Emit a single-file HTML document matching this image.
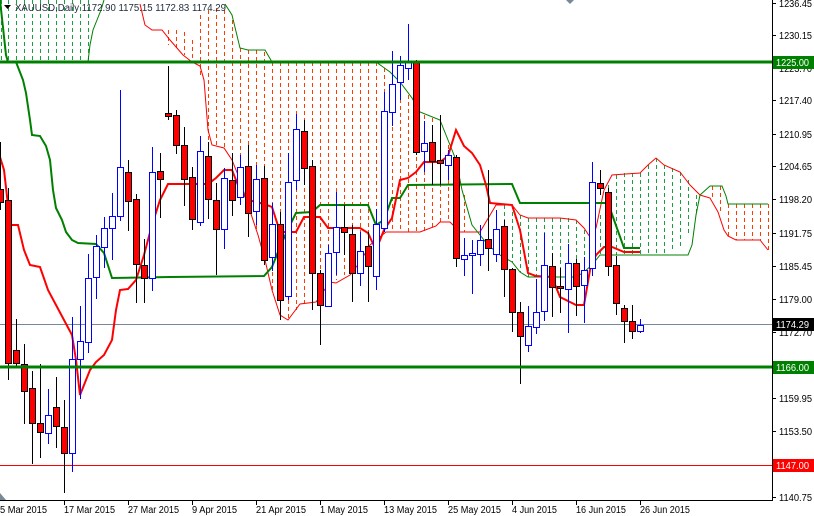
<!DOCTYPE html>
<html><head><meta charset="utf-8"><style>
html,body{margin:0;padding:0;background:#fff;}
svg{display:block;font-family:"Liberation Sans",sans-serif;}
</style></head><body>
<svg width="814" height="516" viewBox="0 0 814 516" xmlns="http://www.w3.org/2000/svg">
<rect width="814" height="516" fill="#fff"/>

<g transform="translate(0.5,0)">
<!-- top-left green cloud -->
<g stroke="#1aa040" stroke-width="1" stroke-dasharray="4,3">
<line x1="1" y1="0" x2="1" y2="62"/><line x1="8" y1="0" x2="8" y2="62"/><line x1="16" y1="0" x2="16" y2="62"/><line x1="24" y1="0" x2="24" y2="62"/><line x1="32" y1="0" x2="32" y2="62"/><line x1="40" y1="0" x2="40" y2="62"/><line x1="48" y1="0" x2="48" y2="62"/><line x1="56" y1="0" x2="56" y2="62"/><line x1="64" y1="0" x2="64" y2="62"/><line x1="72" y1="0" x2="72" y2="62"/><line x1="80" y1="0" x2="80" y2="62"/><line x1="88" y1="0" x2="88" y2="62"/>
</g>
<!-- orange cloud -->
<g stroke="#ff3c00" stroke-width="1" stroke-dasharray="4,3">
<line x1="168" y1="30" x2="168" y2="45"/><line x1="176" y1="30" x2="176" y2="50"/><line x1="184" y1="32" x2="184" y2="55"/><line x1="192" y1="40" x2="192" y2="62"/>
<line x1="200" y1="15" x2="200" y2="75"/><line x1="208" y1="10" x2="208" y2="140"/><line x1="216" y1="8" x2="216" y2="147"/><line x1="224" y1="10" x2="224" y2="150"/><line x1="232" y1="20" x2="232" y2="165"/><line x1="240" y1="48" x2="240" y2="180"/><line x1="248" y1="50" x2="248" y2="205"/><line x1="256" y1="50" x2="256" y2="232"/><line x1="264" y1="52" x2="264" y2="258"/><line x1="272" y1="62" x2="272" y2="290"/><line x1="280" y1="62" x2="280" y2="315"/><line x1="288" y1="62" x2="288" y2="318"/><line x1="296" y1="62" x2="296" y2="310"/><line x1="304" y1="62" x2="304" y2="303"/><line x1="312" y1="62" x2="312" y2="302"/><line x1="320" y1="62" x2="320" y2="290"/><line x1="328" y1="62" x2="328" y2="283"/><line x1="336" y1="62" x2="336" y2="280"/><line x1="344" y1="62" x2="344" y2="275"/><line x1="352" y1="62" x2="352" y2="262"/><line x1="360" y1="62" x2="360" y2="250"/><line x1="368" y1="62" x2="368" y2="240"/><line x1="376" y1="62" x2="376" y2="234"/><line x1="384" y1="68" x2="384" y2="232"/><line x1="392" y1="78" x2="392" y2="232"/><line x1="400" y1="85" x2="400" y2="232"/><line x1="408" y1="95" x2="408" y2="232"/><line x1="416" y1="108" x2="416" y2="232"/><line x1="424" y1="115" x2="424" y2="232"/><line x1="432" y1="118" x2="432" y2="228"/><line x1="440" y1="120" x2="440" y2="222"/><line x1="448" y1="145" x2="448" y2="222"/><line x1="456" y1="160" x2="456" y2="228"/><line x1="464" y1="195" x2="464" y2="232"/>
<line x1="712" y1="186" x2="712" y2="200"/><line x1="720" y1="186" x2="720" y2="212"/>
<line x1="728" y1="204" x2="728" y2="236"/><line x1="736" y1="204" x2="736" y2="240"/><line x1="744" y1="204" x2="744" y2="240"/><line x1="752" y1="204" x2="752" y2="240"/><line x1="760" y1="204" x2="760" y2="240"/><line x1="768" y1="204" x2="768" y2="250"/>
</g>
<!-- green cloud right -->
<g stroke="#1aa040" stroke-width="1" stroke-dasharray="4,3">
<line x1="488" y1="225" x2="488" y2="245"/><line x1="496" y1="210" x2="496" y2="250"/><line x1="504" y1="205" x2="504" y2="255"/><line x1="512" y1="205" x2="512" y2="262"/><line x1="520" y1="215" x2="520" y2="272"/><line x1="528" y1="218" x2="528" y2="277"/><line x1="536" y1="218" x2="536" y2="277"/><line x1="544" y1="218" x2="544" y2="277"/><line x1="552" y1="218" x2="552" y2="277"/><line x1="560" y1="218" x2="560" y2="277"/><line x1="568" y1="218" x2="568" y2="277"/><line x1="576" y1="220" x2="576" y2="277"/><line x1="584" y1="230" x2="584" y2="275"/><line x1="592" y1="230" x2="592" y2="265"/><line x1="600" y1="215" x2="600" y2="255"/><line x1="608" y1="185" x2="608" y2="258"/><line x1="616" y1="175" x2="616" y2="255"/><line x1="624" y1="173" x2="624" y2="255"/><line x1="632" y1="173" x2="632" y2="255"/><line x1="640" y1="173" x2="640" y2="255"/><line x1="648" y1="165" x2="648" y2="255"/><line x1="656" y1="158" x2="656" y2="255"/><line x1="664" y1="165" x2="664" y2="255"/><line x1="672" y1="168" x2="672" y2="250"/><line x1="680" y1="172" x2="680" y2="246"/><line x1="688" y1="180" x2="688" y2="236"/><line x1="696" y1="195" x2="696" y2="215"/>
</g>
</g>
<polyline points="88,62 90,45 93,30 97,20 101,10 104,0" fill="none" stroke="#008000" stroke-width="1"/>

<!-- thin span lines -->
<polyline points="140,4 145,25 152,30 162,30 170,40 183,55 192,62 200,66 204,80 208,130 212,145 224,148 232,160 240,180 248,205 258,235 265,260 272,290 280,315 288,320 300,304 316,302 330,282 336,283 350,275 360,262 370,245 386,232 400,232 420,232 436,226 440,222 450,222 460,232 470,232 480,232 496,205 512,205 520,215 528,218 560,218 576,220 584,228 590,237 596,228 604,190 612,175 640,173 648,165 656,158 664,165 680,172 690,185 700,195 710,198 718,212 724,230 728,236 736,240 760,240 768,250" fill="none" stroke="#ff0000" stroke-width="1"/>
<polyline points="225,4 232,15 240,48 248,50 265,50 272,62 376,62 390,72 400,82 412,98 420,112 440,120 448,140 456,160 462,190 472,225 480,235 488,245 500,255 512,262 520,272 528,277 576,277 584,272 592,265 600,255 624,255 688,255 692,245 696,215 700,195 710,186 722,186 726,196 728,204 768,204" fill="none" stroke="#008000" stroke-width="1"/>

<line x1="0" y1="324.5" x2="772" y2="324.5" stroke="#778899" stroke-width="1"/>
<line x1="0" y1="465.5" x2="772" y2="465.5" stroke="#ff0000" stroke-width="1"/>

<polyline points="0,0 6,55 8,62 16,62 23,80 26,93 30,120 32,135 40,136 46,146 50,160 53,190 56,208 62,220 66,232 72,240 78,243 96,244 104,253 112,278 170,277 264,276 272,267 280,247 288,229 296,213 312,212 320,205 368,205 376,225 384,220 392,198 400,198 408,185 512,184 520,203 608,203 624,248 640,248" fill="none" stroke="#008000" stroke-width="2"/>
<polyline points="0,157 4,170 8,205 10,225 18,225 24,250 30,265 40,267 48,290 56,305 64,320 72,335 76,360 80,395 84,385 90,370 96,362 104,355 112,340 116,310 120,290 128,289 136,280 144,255 152,225 160,200 168,184 208,184 216,178 224,170 232,170 240,190 248,200 264,204 272,207 280,232 296,232 304,217 320,217 328,228 360,228 368,233 376,250 384,230 392,218 400,180 408,178 416,172 424,162 440,162 448,156 456,130 464,146 472,153 480,165 486,185 490,203 512,205 520,230 528,273 536,276 552,277 560,297 568,301 576,305 584,305 590,270 596,255 604,247 612,247 624,252 640,252" fill="none" stroke="#ff0000" stroke-width="2"/>

<g id="candles"></g>

<line x1="0" y1="62" x2="772" y2="62" stroke="#008000" stroke-width="3"/>
<line x1="0" y1="367" x2="772" y2="367" stroke="#008000" stroke-width="3"/>

<line x1="772.5" y1="0" x2="772.5" y2="500" stroke="#000" stroke-width="1"/>
<line x1="0" y1="500.5" x2="773" y2="500.5" stroke="#000" stroke-width="1"/>
<g stroke="#000" stroke-width="1">
<line x1="772" y1="3.5" x2="776" y2="3.5"/><line x1="772" y1="35.5" x2="776" y2="35.5"/><line x1="772" y1="68.5" x2="776" y2="68.5"/><line x1="772" y1="100.5" x2="776" y2="100.5"/><line x1="772" y1="134.5" x2="776" y2="134.5"/><line x1="772" y1="166.5" x2="776" y2="166.5"/><line x1="772" y1="199.5" x2="776" y2="199.5"/><line x1="772" y1="233.5" x2="776" y2="233.5"/><line x1="772" y1="266.5" x2="776" y2="266.5"/><line x1="772" y1="299.5" x2="776" y2="299.5"/><line x1="772" y1="332.5" x2="776" y2="332.5"/><line x1="772" y1="398.5" x2="776" y2="398.5"/><line x1="772" y1="431.5" x2="776" y2="431.5"/><line x1="772" y1="497.5" x2="776" y2="497.5"/>
<line x1="64.5" y1="500" x2="64.5" y2="505"/><line x1="128.5" y1="500" x2="128.5" y2="505"/><line x1="192.5" y1="500" x2="192.5" y2="505"/><line x1="256.5" y1="500" x2="256.5" y2="505"/><line x1="320.5" y1="500" x2="320.5" y2="505"/><line x1="384.5" y1="500" x2="384.5" y2="505"/><line x1="448.5" y1="500" x2="448.5" y2="505"/><line x1="512.5" y1="500" x2="512.5" y2="505"/><line x1="576.5" y1="500" x2="576.5" y2="505"/><line x1="640.5" y1="500" x2="640.5" y2="505"/>
</g>
<line x1="64.5" y1="484" x2="64.5" y2="493" stroke="#000"/>
<g font-size="10" fill="#000" lengthAdjust="spacingAndGlyphs">
<text x="779" y="7" textLength="33" lengthAdjust="spacingAndGlyphs">1236.45</text><text x="779" y="39" textLength="33" lengthAdjust="spacingAndGlyphs">1230.15</text><text x="779" y="72" textLength="33" lengthAdjust="spacingAndGlyphs">1223.70</text><text x="779" y="104" textLength="33" lengthAdjust="spacingAndGlyphs">1217.40</text><text x="779" y="138" textLength="33" lengthAdjust="spacingAndGlyphs">1210.95</text><text x="779" y="170" textLength="33" lengthAdjust="spacingAndGlyphs">1204.65</text><text x="779" y="203" textLength="33" lengthAdjust="spacingAndGlyphs">1198.20</text><text x="779" y="237" textLength="33" lengthAdjust="spacingAndGlyphs">1191.75</text><text x="779" y="270" textLength="33" lengthAdjust="spacingAndGlyphs">1185.45</text><text x="779" y="303" textLength="33" lengthAdjust="spacingAndGlyphs">1179.00</text><text x="779" y="336" textLength="33" lengthAdjust="spacingAndGlyphs">1172.70</text><text x="779" y="402" textLength="33" lengthAdjust="spacingAndGlyphs">1159.95</text><text x="779" y="435" textLength="33" lengthAdjust="spacingAndGlyphs">1153.50</text><text x="779" y="501" textLength="33" lengthAdjust="spacingAndGlyphs">1140.75</text>
</g>
<rect x="773" y="56" width="41" height="13" fill="#008000"/><text x="776" y="66" font-size="10" fill="#fff" textLength="33" lengthAdjust="spacingAndGlyphs">1225.00</text>
<rect x="773" y="361" width="41" height="13" fill="#008000"/><text x="776" y="371" font-size="10" fill="#fff" textLength="33" lengthAdjust="spacingAndGlyphs">1166.00</text>
<rect x="773" y="318" width="41" height="13" fill="#000"/><text x="776" y="328" font-size="10" fill="#fff" textLength="33" lengthAdjust="spacingAndGlyphs">1174.29</text>
<rect x="773" y="459" width="41" height="13" fill="#ff0000"/><text x="776" y="469" font-size="10" fill="#fff" textLength="33" lengthAdjust="spacingAndGlyphs">1147.00</text>

<g font-size="10" fill="#000">
<text x="0" y="513" textLength="47" lengthAdjust="spacingAndGlyphs">5 Mar 2015</text><text x="64" y="513" textLength="51" lengthAdjust="spacingAndGlyphs">17 Mar 2015</text><text x="128" y="513" textLength="51" lengthAdjust="spacingAndGlyphs">27 Mar 2015</text><text x="192" y="513" textLength="45" lengthAdjust="spacingAndGlyphs">9 Apr 2015</text><text x="256" y="513" textLength="50" lengthAdjust="spacingAndGlyphs">21 Apr 2015</text><text x="320" y="513" textLength="48" lengthAdjust="spacingAndGlyphs">1 May 2015</text><text x="384" y="513" textLength="53" lengthAdjust="spacingAndGlyphs">13 May 2015</text><text x="448" y="513" textLength="53" lengthAdjust="spacingAndGlyphs">25 May 2015</text><text x="512" y="513" textLength="45" lengthAdjust="spacingAndGlyphs">4 Jun 2015</text><text x="576" y="513" textLength="50" lengthAdjust="spacingAndGlyphs">16 Jun 2015</text><text x="640" y="513" textLength="50" lengthAdjust="spacingAndGlyphs">26 Jun 2015</text>
</g>

<polygon points="4,5 11,5 7.5,9" fill="#000"/>
<text x="15" y="11" font-size="10" fill="#1e2a3a" textLength="211" lengthAdjust="spacingAndGlyphs">XAUUSD,Daily  1172.90 1175.15 1172.83 1174.29</text>
<polygon points="566,0 574,0 570,4" fill="#778899"/>
<polygon points="0,493 0,500 6,500" fill="#778899"/>
</svg>
<script>
var C=[[0,189,202,142,210,0],[8,200,363,188,380,0],[16,350,363,319,368,0],[24,364,391,344,424,0],[32,388,423,371,464,0],[40,423,432,364,458,0],[48,415,433,389,444,1],[56,407,426,377,448,0],[64,427,453,400,488,0],[72,359,453,317,472,1],[80,341,359,306,399,1],[88,278,342,254,353,1],[96,246,277,235,299,1],[104,228,247,217,268,1],[112,216,228,193,260,1],[120,167,216,90,221,1],[128,172,201,160,231,0],[136,199,264,194,303,0],[144,265,278,239,303,0],[152,172,278,147,291,1],[160,171,179,153,218,0],[168,113,116,66,120,0],[176,115,145,110,154,0],[184,145,179,127,206,0],[192,177,219,167,230,0],[200,151,222,136,226,1],[208,156,199,142,219,0],[216,200,229,183,275,0],[224,178,229,168,249,1],[232,180,200,153,216,0],[240,167,197,155,205,1],[248,166,213,145,237,0],[256,179,211,165,225,1],[264,178,260,166,265,0],[272,224,257,203,271,1],[280,224,300,212,320,0],[288,182,296,153,300,1],[296,129,180,114,190,1],[304,131,168,120,185,0],[312,166,273,160,310,0],[320,273,305,270,345,0],[328,253,306,245,306,1],[336,227,252,192,275,1],[344,227,232,205,255,0],[352,234,273,225,302,0],[360,251,273,232,286,1],[368,246,266,232,302,0],[376,224,276,209,290,1],[384,111,228,92,232,1],[392,84,112,51,126,1],[400,65,82,56,100,1],[408,62,68,24,80,1],[416,61,152,60,155,0],[424,143,151,121,172,1],[432,142,161,125,185,0],[440,160,163,115,185,0],[448,155,165,150,180,1],[456,157,258,155,267,0],[464,255,259,238,276,1],[472,253,255,240,294,1],[480,240,254,225,266,1],[488,239,248,170,271,0],[496,229,254,210,262,1],[504,226,269,220,297,0],[512,269,312,268,332,0],[520,312,336,302,384,0],[528,326,345,306,352,1],[536,312,327,279,334,1],[544,265,311,233,321,1],[552,266,287,253,317,0],[560,286,288,268,313,0],[568,263,289,244,333,1],[576,263,286,259,316,0],[584,270,285,257,323,1],[592,182,268,162,276,1],[600,183,188,170,195,0],[608,192,266,188,276,0],[616,265,303,256,315,0],[624,308,321,305,343,0],[632,321,331,305,339,0],[640,325,331,319,333,1]];
var s='';
C.forEach(function(c){var x=c[0],b=c[5];var col=b?'#0000ff':'#000';
s+='<line x1="'+(x+0.5)+'" y1="'+c[3]+'" x2="'+(x+0.5)+'" y2="'+c[4]+'" stroke="'+col+'" stroke-width="1"/>';
var h=Math.max(c[2]-c[1],2);
s+='<rect x="'+(x-2.5)+'" y="'+(c[1]+0.5)+'" width="6" height="'+h+'" fill="'+(b?'#fff':'#ff0000')+'" stroke="'+col+'" stroke-width="1"/>';});
document.getElementById('candles').innerHTML=s;
</script>
</body></html>
